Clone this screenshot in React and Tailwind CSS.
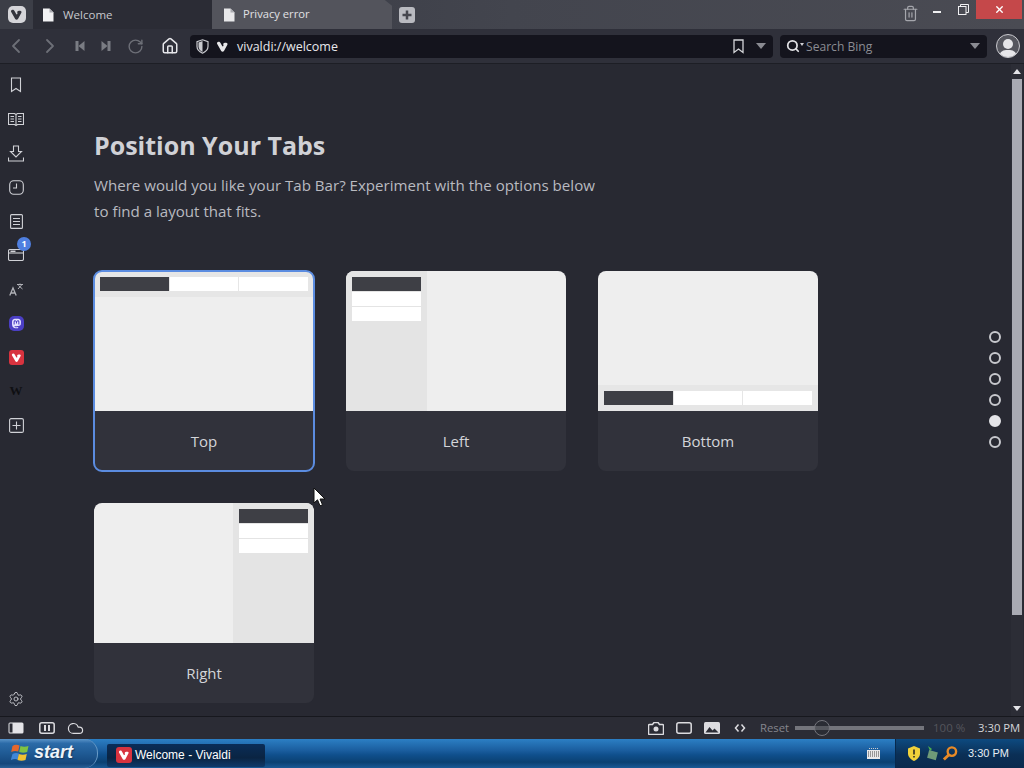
import React from "react";
import { Settings, Cloud, ChevronLeft, ChevronRight, RotateCw, Home, Search, Trash2, X } from "lucide-react";
import { FaMastodon } from "react-icons/fa";

const font = { fontFamily: '"Open Sans", "Noto Sans", sans-serif' };

function VLogo({ size = 16, color = "#fff" }) {
  return (
    <svg width={size} height={size} viewBox="0 0 16 16">
      <path d="M1.500 5c-.8-1.500.2-3 1.700-3 1.100 0 1.700.6 2.200 1.500l2.200 4c.4.6 1.100.6 1.500 0 .3-.5 0-1-.1-1.500-.3-1.300.6-2.500 2-2.500 2.400 0 3.800.5 3 2.300L9.800 13.500c-.8 1.300-2.600 1.300-3.400 0z" fill={color} />
    </svg>
  );
}

function Triangle({ className = "" }) {
  return <span className={`w-0 h-0 border-l-[5px] border-r-[5px] border-t-[6px] border-l-transparent border-r-transparent border-t-[#8a8b92] ${className}`} />;
}

function Skip({ flip }) {
  return (
    <svg width="10" height="12" viewBox="0 0 10 12" className={flip ? "scale-x-[-1]" : ""}>
      <rect x="0.500" y="1" width="3" height="10" fill="#7a7c83" />
      <path d="M9.500 1v10L3.500 6z" fill="#7a7c83" />
    </svg>
  );
}

function PageIcon({ dim }) {
  return (
    <svg width="12" height="14" viewBox="0 0 12 14">
      <path d="M1 .5h6.500L11.500 4.500V13.500H1z" fill={dim ? "#e8e8ea" : "#f2f2f4"} />
      <path d="M7.500.5V4.500H11.500" fill="#a9aab0" />
    </svg>
  );
}

function TabBar() {
  return (
    <div className="h-[29px] flex items-stretch bg-gradient-to-r from-[#33353f] via-[#43454e] to-[#4a4b53]">
      <div className="w-[33px] flex items-center justify-center bg-[#3c3e47]">
        <div className="w-[18px] h-[17px] rounded-[5px] bg-[#d5d5d9] flex items-center justify-center"><VLogo size={13} color="#34353d" /></div>
      </div>
      <div className="w-[179px] bg-[#2b2c35] flex items-center pl-[9px] gap-[9px]">
        <PageIcon />
        <span className="text-[11.500px] text-[#c8c9ce]">Welcome</span>
      </div>
      <div className="w-[180px] bg-[#53545c] flex items-center pl-[11px] gap-[8px] [clip-path:polygon(0_0,96%_0,100%_20%,100%_100%,0_100%)]">
        <PageIcon dim />
        <span className="text-[11.200px] text-[#e2e2e5]">Privacy error</span>
      </div>
      <div className="flex items-center pl-[7px]">
        <div className="w-[16px] h-[16px] rounded-[3px] bg-[#b9bac0] flex items-center justify-center text-[#4a4b53]">
          <svg width="12" height="12" viewBox="0 0 12 12"><path d="M6 1.500v9M1.500 6h9" stroke="#45464e" strokeWidth="2.500" /></svg>
        </div>
      </div>
      <div className="flex-1" />
      <div className="flex items-start">
        <div className="mt-[5px] mr-[5px]"><Trash2 size={17} color="#a5a6ac" strokeWidth={1.700} /></div>
        <div className="w-[26px] h-[19px] flex items-center justify-center pt-[5px]"><div className="w-[8px] h-[2px] bg-[#f0f0f2]" /></div>
        <div className="w-[26px] h-[19px] flex items-center justify-center">
          <svg width="11" height="11" viewBox="0 0 11 11" fill="none" stroke="#f0f0f2"><rect x=".5" y="2.500" width="7.500" height="8" /><path d="M2.500 2.500V.5H10.500V8.500H8" /></svg>
        </div>
        <div className="w-[46px] h-[19px] mr-[2px] bg-[#c5484a] flex items-center justify-center"><X size={11} color="#fff" strokeWidth={3} /></div>
      </div>
    </div>
  );
}

function AddressBar() {
  return (
    <div className="h-[35px] flex items-center bg-[#2f303a] border-b border-[#1d1e25]">
      <div className="w-[32px] flex justify-center"><ChevronLeft size={24} color="#6d6f77" strokeWidth={1.800} /></div>
      <div className="w-[35px] flex justify-center"><ChevronRight size={24} color="#6d6f77" strokeWidth={1.800} /></div>
      <div className="w-[26px] flex justify-center"><Skip /></div>
      <div className="w-[26px] flex justify-center"><Skip flip /></div>
      <div className="w-[29px] pl-[4px] flex justify-center"><RotateCw size={17} color="#6d6f77" strokeWidth={2} /></div>
      <div className="w-[42px] pl-[2px] flex justify-center"><Home size={18} color="#e6e6ea" strokeWidth={2} /></div>
      <div className="w-[583px] h-[23px] bg-[#14141d] rounded-[4px] flex items-center pl-[6px] pr-[7px]">
        <svg width="13" height="15" viewBox="0 0 13 15">
          <path d="M6.500.8l5.500 1.800v4.900c0 3.200-2.500 5.300-5.500 6.700-3-1.400-5.500-3.500-5.500-6.700V2.600z" fill="#14141d" stroke="#c8c9ce" strokeWidth="1.200" />
          <path d="M6.500 2v11c-2.400-1.200-4-2.900-4-5.500V3.500z" fill="#c8c9ce" />
        </svg>
        <span className="ml-[7px]"><VLogo size={13} color="#e8e8ea" /></span>
        <span className="ml-[8px] pt-[2px] text-[12.500px] font-medium text-[#e8e8ec]">vivaldi://welcome</span>
        <span className="flex-1" />
        <svg width="11" height="15" viewBox="0 0 11 15" fill="none" stroke="#d4d5d9" strokeWidth="1.300"><path d="M1 1h9v12.500L5.500 10 1 13.500z" /></svg>
        <Triangle className="ml-[12px]" />
      </div>
      <div className="w-[207px] h-[23px] ml-[7px] bg-[#14141d] rounded-[4px] flex items-center pl-[6px] pr-[7px]">
        <Search size={14} color="#e0e0e4" strokeWidth={3} />
        <span className="w-0 h-0 border-l-[2px] border-r-[2px] border-t-[3px] border-l-transparent border-r-transparent border-t-[#d0d0d4] mb-[4px]" />
        <span className="ml-[2px] pt-[2px] text-[12.100px] text-[#8b8c93]">Search Bing</span>
        <span className="flex-1" />
        <Triangle />
      </div>
      <div className="ml-[9px] w-[24px] h-[24px] rounded-full bg-[#55565e] border border-[#c9c9ce] flex flex-col items-center justify-end overflow-hidden">
        <div className="w-[10px] h-[10px] rounded-full bg-[#e6e6e9] mb-[1px]" />
        <div className="w-[18px] h-[7px] rounded-t-full bg-[#e6e6e9]" />
      </div>
    </div>
  );
}

const c = "#d0d1d6";

function SideSvg({ w = 16, h = 16, children }) {
  return <svg width={w} height={h} viewBox={`0 0 ${w} ${h}`} fill="none" stroke={c} strokeWidth="1.100">{children}</svg>;
}

function Sidebar() {
  const row = "h-[34px] flex items-center justify-center";
  return (
    <div className="w-[32px] flex flex-col pt-[4px] bg-[#282932]">
      <div className={row}>
        <SideSvg w={12} h={16}><path d="M1.500 1h9v13.500L6 11.500 1.500 14.500z" /></SideSvg>
      </div>
      <div className={row}>
        <SideSvg h={14}><path d="M.5 1.500h6l1.500 1 1.500-1h6v11h-6L8 13.500l-1.500-1h-6zM8 2.500v11" /><path d="M2.500 4.500h3.500M2.500 7h3.500M2.500 9.500h3.500M10 4.500h3.500M10 7h3.500M10 9.500h3.500" /></SideSvg>
      </div>
      <div className={row}>
        <SideSvg h={17}><path d="M5.500 1h5v5.500h3L8 12 2.500 6.500h3z" /><path d="M.5 12.500v3.500h15v-3.500" /></SideSvg>
      </div>
      <div className={row}>
        <SideSvg w={15} h={15}><rect x=".7" y=".7" width="13.600" height="13.600" rx="4" /><path d="M7.500 3.500v4.500H4" /></SideSvg>
      </div>
      <div className={row}>
        <SideSvg w={13} h={15}><rect x=".6" y=".6" width="11.800" height="13.800" rx="1" /><path d="M3 4.500h7M3 7.500h7M3 10.500h7" /></SideSvg>
      </div>
      <div className={`${row} relative`}>
        <SideSvg h={12}><rect x=".5" y=".5" width="15" height="11" rx="1.500" /><path d="M.5 4h15" /><path d="M2.500 2.300h5" strokeWidth="1.500" /></SideSvg>
        <span className="absolute left-[17px] top-[-1px] w-[14px] h-[14px] rounded-full bg-[#4f7fe0] text-[9px] font-bold leading-[14px] text-center text-white">1</span>
      </div>
      <div className={row}>
        <svg width="15" height="13" viewBox="0 0 15 13" fill="none" stroke="#b0b1b7" strokeWidth="1.300"><path d="M.8 12.500L4 5l3.200 7.500M2 10h4" /><path d="M8 1.500h6M11 .5v1.500M13 1.500L9 6M9.500 2.500L13.500 6" strokeWidth="1" /></svg>
      </div>
      <div className={row}><div className="w-[15px] h-[15px] rounded-[5px] bg-[#4b3fc4] flex items-center justify-center"><FaMastodon size={11} color="#e4e2ff" /></div></div>
      <div className={row}><div className="w-[15px] h-[15px] rounded-[3px] bg-[#d8333f] flex items-center justify-center"><VLogo size={11} /></div></div>
      <div className={row}><span className="text-[13px] font-bold text-[#0f0f12]" style={{ fontFamily: '"Liberation Serif", serif' }}>W</span></div>
      <div className={row}>
        <SideSvg w={15} h={15}><rect x=".6" y=".6" width="13.800" height="13.800" rx="1.500" /><path d="M7.500 3.500v8M3.500 7.500h8" /></SideSvg>
      </div>
      <div className="flex-1" />
      <div className="h-[34px] flex items-center justify-center"><Settings size={16} color={c} strokeWidth={1.300} /></div>
    </div>
  );
}

function TabStrip({ vertical }) {
  if (vertical) {
    return (
      <div className="flex flex-col gap-[1px] w-[69px]">
        <div className="h-[14px] bg-[#3e3f45]" />
        <div className="h-[14px] bg-white" />
        <div className="h-[14px] bg-white" />
      </div>
    );
  }
  return (
    <div className="flex gap-[1px] h-[14px]">
      <div className="flex-1 bg-[#3e3f45]" />
      <div className="flex-1 bg-white" />
      <div className="flex-1 bg-white" />
    </div>
  );
}

function Thumb({ pos }) {
  if (pos === "Top" || pos === "Bottom") {
    return (
      <div className={`h-[140px] bg-[#eeeeee] flex ${pos === "Top" ? "flex-col" : "flex-col-reverse"}`}>
        <div className="h-[26px] bg-[#e6e6e6] px-[6px] py-[6px]"><TabStrip /></div>
      </div>
    );
  }
  return (
    <div className={`h-[140px] bg-[#eeeeee] flex ${pos === "Left" ? "flex-row" : "flex-row-reverse"}`}>
      <div className="w-[81px] h-full bg-[#e4e4e4] p-[6px]"><TabStrip vertical /></div>
    </div>
  );
}

function Card({ label, selected }) {
  return (
    <div className={`w-[220px] h-[200px] rounded-[8px] overflow-hidden flex flex-col bg-[#31323b] ${selected ? "outline-2 outline-[#5b8ce0] -outline-offset-1" : ""}`}>
      <Thumb pos={label} />
      <div className="flex-1 flex items-center justify-center text-[15px] text-[#d4d5d9]">{label}</div>
    </div>
  );
}

function Content() {
  return (
    <div className="flex-1 relative bg-[#282932] flex overflow-hidden">
      <div className="flex-1 pl-[62px] pt-[61px]">
        <h1 className="text-[25px] leading-[40px] font-bold text-[#d0d1d6]">Position Your Tabs</h1>
        <p className="mt-[7px] w-[505px] text-[15.100px] leading-[26px] text-[#b9bac0]">Where would you like your Tab Bar? Experiment with the options below to find a layout that fits.</p>
        <div className="mt-[47px] grid grid-cols-[220px_220px_220px] gap-x-[32px] gap-y-[32px]">
          <Card label="Top" selected />
          <Card label="Left" />
          <Card label="Bottom" />
          <Card label="Right" />
        </div>
      </div>
      <div className="absolute left-[957px] top-[267px] flex flex-col gap-[9px]">
        {[0, 1, 2, 3, 4, 5].map((i) => (
          <div key={i} className={`w-[12px] h-[12px] rounded-full border-2 border-[#c7c8cd] ${i === 4 ? "bg-[#e4e4e8] border-[#e4e4e8]" : ""}`} />
        ))}
      </div>
      <svg className="absolute left-[281px] top-[423px]" width="13" height="20" viewBox="0 0 13 20">
        <path d="M1 1v15l3.500-3.200 2.500 6 2.500-1-2.500-5.800h5z" fill="#fff" stroke="#111" strokeWidth="1" />
      </svg>
      <div className="w-[12px] mr-[1px] flex flex-col items-center bg-[#2c2d36]">
        <svg width="8" height="5" viewBox="0 0 8 5" className="mt-[5px] mb-[5px]"><path d="M0 5L4 0l4 5z" fill="#e4e4e8" /></svg>
        <div className="w-[10px] h-[536px] bg-[#a9aab3]" />
        <div className="flex-1" />
        <svg width="8" height="5" viewBox="0 0 8 5" className="mb-[5px]"><path d="M0 0l4 5 4-5z" fill="#e4e4e8" /></svg>
      </div>
    </div>
  );
}

function StatusBar() {
  const s = "#dcdce0";
  return (
    <div className="h-[23px] flex items-center bg-[#2b2c35] border-t border-[#17181e]">
      <div className="w-[32px] flex justify-center">
        <svg width="16" height="12" viewBox="0 0 16 12"><rect x=".5" y=".5" width="15" height="11" rx="1.500" fill="#e4e4e8" /><rect x="1.500" y="1.500" width="3" height="9" fill="#2b2c35" /></svg>
      </div>
      <div className="w-[29px] flex justify-center">
        <svg width="16" height="12" viewBox="0 0 16 12" fill="none" stroke={s} strokeWidth="1.500"><rect x=".8" y=".8" width="14.400" height="10.400" rx="2" /><path d="M6 3v6M10 3v6" strokeWidth="2" /></svg>
      </div>
      <div className="w-[28px] flex justify-center"><Cloud size={17} color={s} strokeWidth={1.700} /></div>
      <div className="flex-1" />
      <div className="w-[28px] flex justify-center">
        <svg width="16" height="13" viewBox="0 0 16 13"><path d="M1.500 2.500h3L6 .5h4l1.500 2h3c.6 0 1 .4 1 1v8c0 .6-.4 1-1 1h-13c-.6 0-1-.4-1-1v-8c0-.6.4-1 1-1z" fill="none" stroke={s} strokeWidth="1.500" /><circle cx="8" cy="7" r="2.500" fill={s} /></svg>
      </div>
      <div className="w-[28px] flex justify-center">
        <svg width="16" height="12" viewBox="0 0 16 12" fill="none" stroke={s} strokeWidth="1.500"><rect x=".8" y=".8" width="14.400" height="10.400" rx="2" /></svg>
      </div>
      <div className="w-[28px] flex justify-center">
        <svg width="16" height="12" viewBox="0 0 16 12"><rect width="16" height="12" rx="1.500" fill={s} /><path d="M1.500 10.500L5.500 5l3 3.500 2-2 4 4z" fill="#2b2c35" /></svg>
      </div>
      <div className="w-[28px] flex justify-center">
        <svg width="12" height="10" viewBox="0 0 12 10" fill="none" stroke={s} strokeWidth="1.500"><path d="M4.500 1.500L1.500 5l3 3.500M7.500 1.500L10.500 5l-3 3.500" /></svg>
      </div>
      <span className="ml-[6px] w-[28px] text-[11.300px] whitespace-nowrap text-[#85868d]">Reset</span>
      <div className="relative ml-[7px] w-[129px] h-[4px] bg-[#74757c]">
        <div className="absolute left-[19px] top-[-6px] w-[16px] h-[16px] rounded-full border border-[#74757c] bg-[#2b2c35]/40" />
      </div>
      <span className="ml-[9px] w-[32px] text-[11.500px] whitespace-nowrap text-[#54555c]">100 %</span>
      <span className="ml-[13px] mr-[5px] w-[41px] text-[11.300px] whitespace-nowrap text-[#d4d5d9]">3:30 PM</span>
    </div>
  );
}

function Taskbar() {
  return (
    <div className="h-[29px] flex items-stretch bg-[linear-gradient(#2c7fc4_0%,#1a5d9e_40%,#0f4f8c_55%,#0b4172_80%,#1a5a96_100%)]" style={{ fontFamily: '"Liberation Sans", sans-serif' }}>
      <div className="w-[98px] flex items-center pl-[11px] pb-[2px] rounded-r-[14px] bg-[linear-gradient(#5a93c8_0%,#2b6ba8_15%,#1f5a94_50%,#15477c_85%,#2a6198_100%)] border-r border-[#6a9cc8]">
        <svg width="19" height="19" viewBox="0 0 19 19">
          <path d="M1.500 3q3-2 7-.5l-1.300 6q-3.500-1-7 .5z" fill="#e5672c" />
          <path d="M9.500 3q3.500 1.500 8 0l-1.300 6q-4 1.500-8 0z" fill="#7fc241" />
          <path d="M0 11q3-1.500 6.500-.5L5.300 16.500q-3.500-1-7 .5z" fill="#3f86d8" transform="translate(1.500 0)" />
          <path d="M7.800 11q4 1.500 8 0L14.500 17q-4 1.500-8 0z" fill="#f1c232" />
        </svg>
        <span className="ml-[4px] text-[18px] italic font-bold text-[#eef4fa] [text-shadow:1px_1px_1px_#1a3a60]">start</span>
      </div>
      <div className="w-[9px]" />
      <div className="w-[158px] h-[23px] self-end mb-[1px] flex items-center pl-[9px] pb-[2px] bg-[linear-gradient(#0a2d58,#0a2442_60%,#0f3a6a)] rounded-[2px]">
        <div className="w-[16px] h-[16px] rounded-[3px] bg-[#d8333f] flex items-center justify-center"><VLogo size={12} /></div>
        <span className="ml-[3px] text-[12px] text-white">Welcome - Vivaldi</span>
      </div>
      <div className="flex-1" />
      <div className="w-[28px] flex items-center">
        <svg width="13" height="13" viewBox="0 0 13 13"><rect y="3" width="13" height="9" fill="#e8e8ea" /><path d="M1 5h11M1 7h11M1 9h11" stroke="#444" strokeDasharray="1 1" /><path d="M2 1.500h9" stroke="#ccc" strokeDasharray="1 1" /></svg>
      </div>
      <div className="w-[129px] flex items-center pl-[11px] bg-[linear-gradient(#0d4a80,#0b2f55_55%,#0a2a4e)] border-l border-[#08294c]">
        <svg width="14" height="15" viewBox="0 0 14 15"><path d="M7 0l6 2.500v5c0 3.500-3 6-6 7.500-3-1.500-6-4-6-7.500v-5z" fill="#f2d23a" /><path d="M7 3.500v5M7 10v1.500" stroke="#222" strokeWidth="1.500" /></svg>
        <svg className="ml-[4px]" width="13" height="15" viewBox="0 0 13 15"><path d="M3 0l4 3-2 2z" fill="#4caf50" /><rect x="3" y="5" width="9" height="8" fill="#6f9a78" transform="rotate(15 7 9)" /></svg>
        <svg className="ml-[4px]" width="16" height="17" viewBox="0 0 17 17" fill="none"><circle cx="10.500" cy="6.500" r="4.500" stroke="#e88a26" strokeWidth="2.500" /><path d="M7 10l-5 5" stroke="#e88a26" strokeWidth="3" /></svg>
        <span className="ml-[10px] text-[11px] text-[#e6eef6]">3:30 PM</span>
      </div>
    </div>
  );
}

export default function App() {
  return (
    <div className="w-[1024px] h-[768px] flex flex-col overflow-hidden bg-[#282932]" style={font}>
      <TabBar />
      <AddressBar />
      <div className="flex-1 flex min-h-0">
        <Sidebar />
        <Content />
      </div>
      <StatusBar />
      <Taskbar />
    </div>
  );
}
